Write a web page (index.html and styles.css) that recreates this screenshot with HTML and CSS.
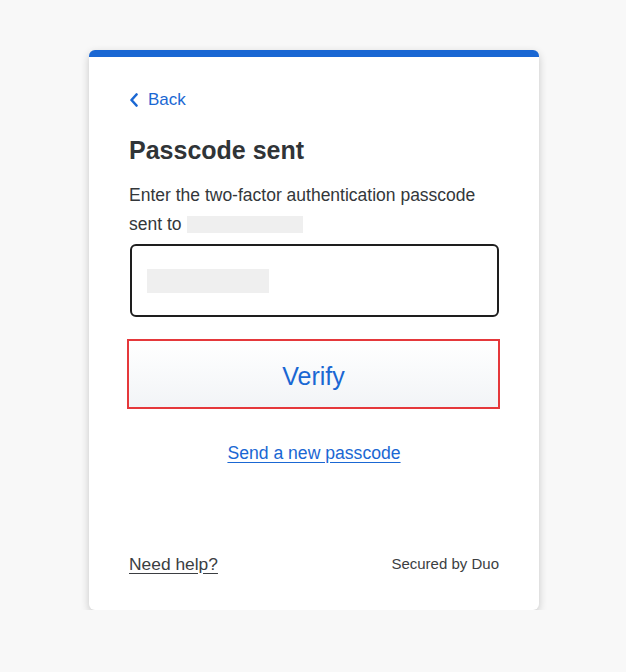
FILE: index.html
```html
<!DOCTYPE html>
<html>
<head>
<meta charset="utf-8">
<link rel="stylesheet" href="styles.css">
</head>
<body>
<main class="page">
  <section class="card">
    <a class="back" href="#">
      <svg class="chev" width="10" height="14" viewBox="0 0 10 14"><path d="M7.5 1.5 L2.5 7 L7.5 12.5" fill="none" stroke="#1a67d3" stroke-width="2.6" stroke-linecap="round" stroke-linejoin="round"/></svg>
      <span>Back</span>
    </a>
    <h1 class="title">Passcode sent</h1>
    <p class="desc">Enter the two-factor authentication passcode sent to <span class="redact redact-inline"></span></p>
    <div class="input"><span class="redact redact-field"></span></div>
    <button class="verify">Verify</button>
    <a class="resend" href="#">Send a new passcode</a>
    <footer class="foot">
      <a class="help" href="#">Need help?</a>
      <span class="secured">Secured by Duo</span>
    </footer>
  </section>
</main>
</body>
</html>
```
FILE: styles.css
```css
* { box-sizing: border-box; }
html, body { margin: 0; padding: 0; }
body {
  background: #f8f8f8;
  font-family: "Liberation Sans", Arial, sans-serif;
  color: #33373a;
}
.page {
  display: flex;
  justify-content: center;
  padding-top: 50px;
  padding-left: 2px;
}
.card {
  width: 450px;
  height: 560px;
  background: #fff;
  border-top: 7px solid #1a67d3;
  border-radius: 6px;
  box-shadow: 0 3px 8px rgba(0,0,0,0.2);
  padding: 31px 40px 34px 40px;
  display: flex;
  flex-direction: column;
}
.back {
  display: flex;
  align-items: center;
  gap: 9px;
  color: #1a67d3;
  text-decoration: none;
  font-size: 17px;
  line-height: 24px;
  align-self: flex-start;
}
.chev { display: block; margin-top: -1px; }
.title {
  margin: 23px 0 0 0;
  font-size: 25px;
  line-height: 30px;
  font-weight: 700;
  color: #303437;
}
.desc {
  margin: 16px 0 0 0;
  font-size: 17.5px;
  line-height: 29px;
  color: #33373a;
}
.redact {
  display: inline-block;
  background: #efefef;
}
.redact-inline {
  width: 116px;
  height: 17px;
  vertical-align: -3px;
  margin-left: 1px;
}
.input {
  margin-top: 5px;
  height: 73px;
  border: 2px solid #1e1e1e;
  border-radius: 6px;
  display: flex;
  align-items: center;
  padding-left: 15px;
  margin-left: 1px;
}
.redact-field {
  width: 122px;
  height: 24px;
}
.verify {
  margin-top: 22px;
  height: 70px;
  margin-left: -2px;
  margin-right: -1px;
  padding-top: 5px;
  border: 2px solid #e5383b;
  background: linear-gradient(#ffffff, #f2f4f7);
  color: #1a67d3;
  font-family: "Liberation Sans", Arial, sans-serif;
  font-size: 25px;
  cursor: pointer;
}
.resend {
  margin-top: 32px;
  align-self: center;
  color: #1a67d3;
  font-size: 17.6px;
  line-height: 24px;
  text-decoration: underline;
  text-underline-offset: 3px;
}
.foot {
  margin-top: auto;
  display: flex;
  justify-content: space-between;
  align-items: center;
  line-height: 24px;
}
.help {
  color: #3b3e42;
  font-size: 17.4px;
  text-decoration: underline;
  text-underline-offset: 3px;
}
.secured {
  color: #3b3e42;
  font-size: 15px;
}
```
